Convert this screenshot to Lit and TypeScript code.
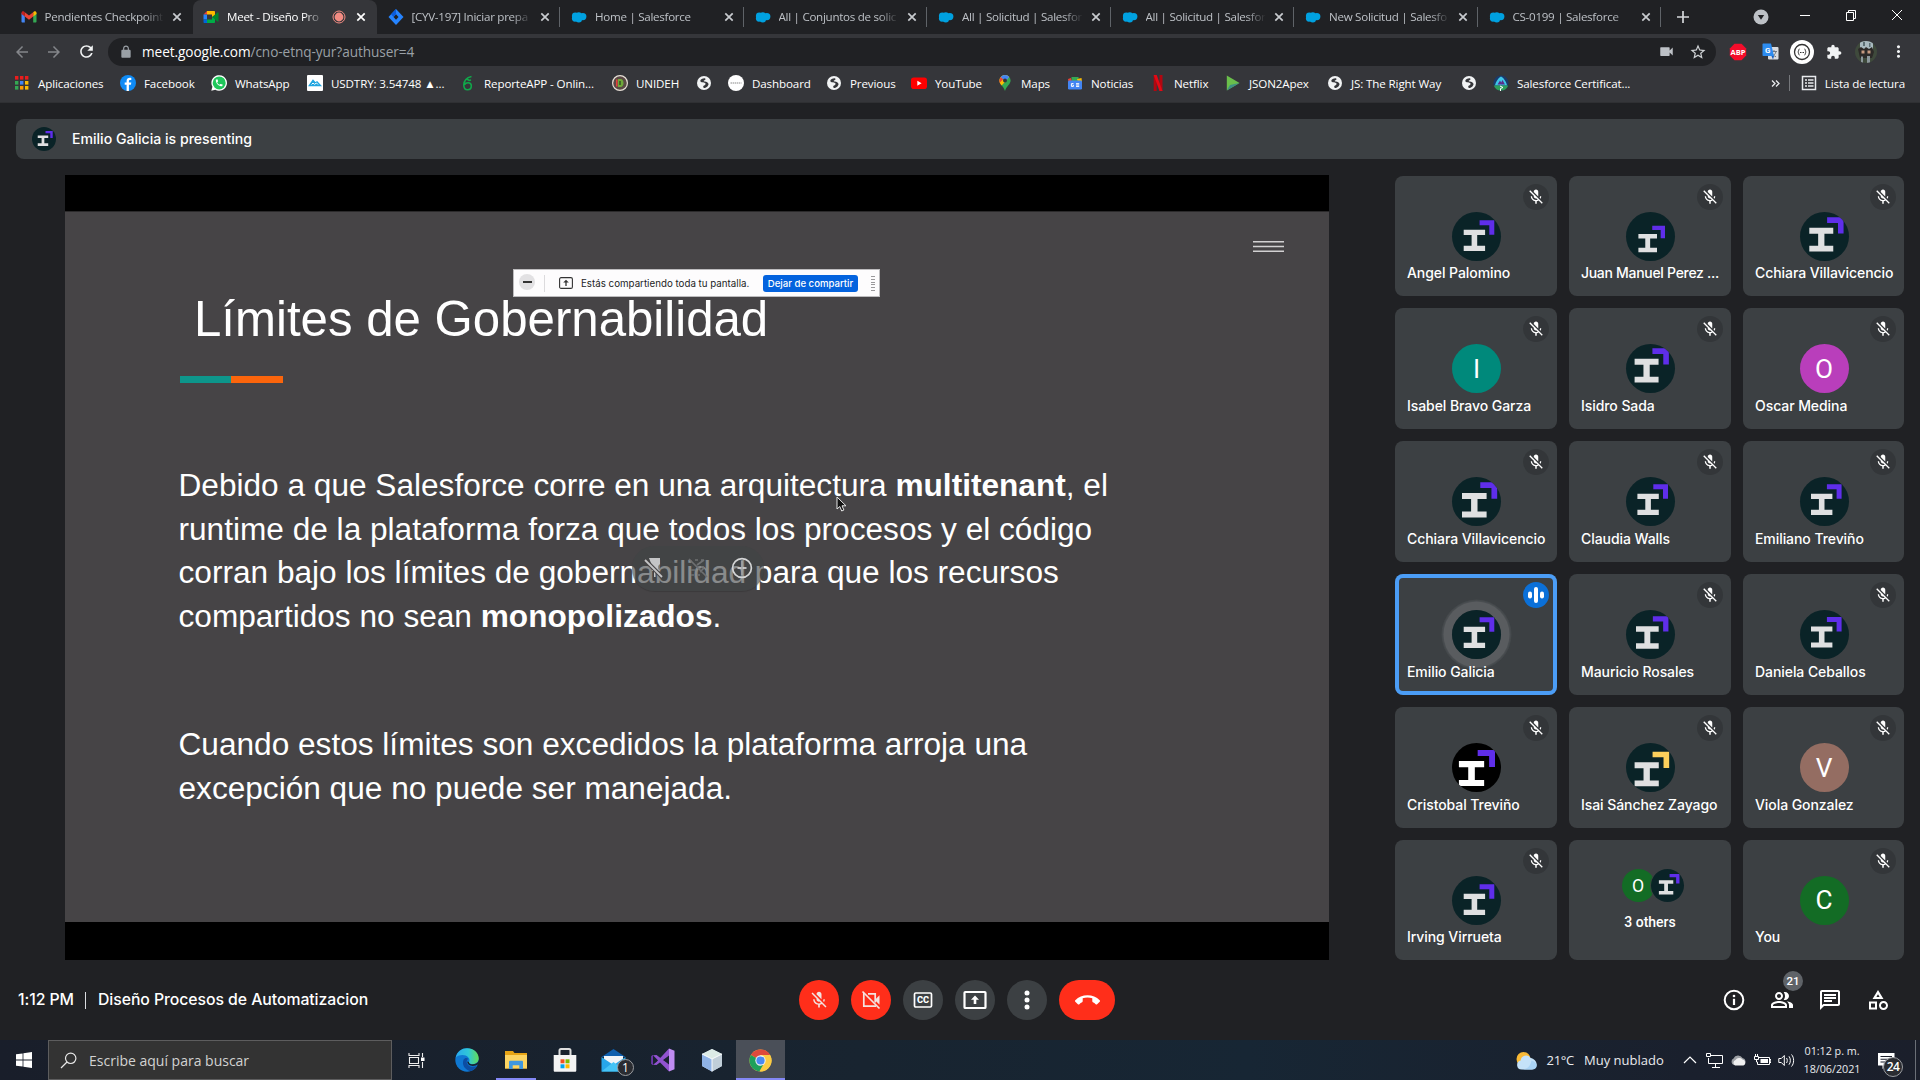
import { LitElement, html, css, svg, nothing, TemplateResult } from "lit";
import { customElement, property } from "lit/decorators.js";
import { classMap } from "lit/directives/class-map.js";

type Art = TemplateResult;

const icon = (size: number, box: string, body: unknown): Art =>
  html`<svg class="ico" width=${size} height=${size} viewBox=${box}>${body}</svg>`;
const m = (size: number, d: string, fill = "#fff"): Art =>
  icon(size, "0 0 24 24", svg`<path d=${d} fill=${fill} />`);

const P = {
  micOff:
    "M19 11h-1.7c0 .74-.16 1.43-.43 2.05l1.23 1.23c.56-.98.9-2.09.9-3.28zm-4.02.17c0-.06.02-.11.02-.17V5c0-1.66-1.34-3-3-3S9 3.34 9 5v.18l5.98 5.99zM4.27 3L3 4.27l6.01 6.01V11c0 1.66 1.33 3 2.99 3 .22 0 .44-.03.65-.08l1.66 1.66c-.71.33-1.5.52-2.31.52-2.76 0-5.3-2.1-5.3-5.1H5c0 3.41 2.72 6.23 6 6.72V21h2v-3.28c.91-.13 1.77-.45 2.54-.9L19.73 21 21 19.73 4.27 3z",
  callEnd:
    "M12 9c-1.6 0-3.15.25-4.6.72v3.1c0 .39-.23.74-.56.9-.98.49-1.87 1.12-2.66 1.85-.18.18-.43.28-.7.28-.28 0-.53-.11-.71-.29L.29 13.08c-.18-.17-.29-.42-.29-.7 0-.28.11-.53.29-.71C3.34 8.78 7.46 7 12 7s8.66 1.78 11.71 4.67c.18.18.29.43.29.71 0 .28-.11.53-.29.71l-2.48 2.48c-.18.18-.43.29-.71.29-.27 0-.52-.11-.7-.28-.79-.74-1.69-1.36-2.67-1.85-.33-.16-.56-.5-.56-.9v-3.1C15.15 9.25 13.6 9 12 9z",
  puzzle:
    "M20.5 11H19V7c0-1.1-.9-2-2-2h-4V3.5C13 2.12 11.88 1 10.5 1S8 2.12 8 3.5V5H4c-1.1 0-1.99.9-1.99 2v3.8H3.5c1.49 0 2.7 1.21 2.7 2.7s-1.21 2.7-2.7 2.7H2V20c0 1.1.9 2 2 2h3.8v-1.5c0-1.49 1.21-2.7 2.7-2.7 1.49 0 2.7 1.21 2.7 2.7V22H17c1.1 0 2-.9 2-2v-4h1.5c1.38 0 2.5-1.12 2.5-2.5S21.88 11 20.5 11z",
  star:
    "M22 9.24l-7.19-.62L12 2 9.19 8.63 2 9.24l5.46 4.73L5.82 21 12 17.27 18.18 21l-1.63-7.03L22 9.24zM12 15.4l-3.76 2.27 1-4.28-3.32-2.88 4.38-.38L12 6.1l1.71 4.04 4.38.38-3.32 2.88 1 4.28L12 15.4z",
  refresh:
    "M17.65 6.35C16.2 4.9 14.21 4 12 4c-4.42 0-7.99 3.58-7.99 8s3.57 8 7.99 8c3.73 0 6.84-2.55 7.73-6h-2.08c-.82 2.33-3.04 4-5.65 4-3.31 0-6-2.69-6-6s2.69-6 6-6c1.66 0 3.14.69 4.22 1.78L13 11h7V4l-2.35 2.35z",
  back: "M20 11H7.83l5.59-5.59L12 4l-8 8 8 8 1.41-1.41L7.83 13H20v-2z",
  forward: "M4 13h12.17l-5.59 5.59L12 20l8-8-8-8-1.41 1.41L16.17 11H4v2z",
  lock: "M18 8h-1V6c0-2.76-2.24-5-5-5S7 3.24 7 6v2H6c-1.1 0-2 .9-2 2v10c0 1.1.9 2 2 2h12c1.1 0 2-.9 2-2V10c0-1.1-.9-2-2-2zM9 8V6c0-1.66 1.34-3 3-3s3 1.34 3 3v2H9z",
  cam: "M17 10.5V6c0-.6-.4-1-1-1H3c-.6 0-1 .4-1 1v12c0 .6.4 1 1 1h13c.6 0 1-.4 1-1v-4.500l5 5V5.500l-5 5z",
  dots: "M12 8c1.100 0 2-.9 2-2s-.9-2-2-2-2 .9-2 2 .9 2 2 2zm0 2c-1.100 0-2 .9-2 2s.9 2 2 2 2-.9 2-2-.9-2-2-2zm0 6c-1.100 0-2 .9-2 2s.9 2 2 2 2-.9 2-2-.9-2-2-2z",
  people:
    "M16.67 13.13C18.04 14.06 19 15.32 19 17v3h4v-3c0-2.18-3.57-3.47-6.33-3.87zM15 12c2.21 0 4-1.790 4-4s-1.790-4-4-4c-.47 0-.91.1-1.330.24C14.500 5.270 15 6.580 15 8s-.5 2.730-1.330 3.760c.42.14.86.24 1.330.24zM9 12c2.210 0 4-1.790 4-4s-1.790-4-4-4-4 1.790-4 4 1.790 4 4 4zm0-6c1.100 0 2 .9 2 2s-.9 2-2 2-2-.9-2-2 .9-2 2-2zM9 13c-2.670 0-8 1.340-8 4v3h16v-3c0-2.660-5.330-4-8-4zm6 5H3v-.99C3.200 16.290 6.300 15 9 15s5.800 1.290 6 2v1z",
  chat: "M4 4h16v12H5.170L4 17.170V4m0-2c-1.100 0-1.990.9-1.990 2L2 22l4-4h14c1.100 0 2-.9 2-2V4c0-1.100-.9-2-2-2H4zm2 10h8v2H6v-2zm0-3h12v2H6V9zm0-3h12v2H6V6z",
  category:
    "M12 2l-5.500 9h11L12 2zm0 4.300L13.600 9h-3.200L12 6.300zM17.500 13c-2.490 0-4.500 2.010-4.500 4.500s2.010 4.500 4.500 4.500 4.500-2.010 4.500-4.500-2.010-4.500-4.500-4.500zm0 7c-1.380 0-2.500-1.120-2.500-2.500s1.120-2.500 2.500-2.500 2.500 1.120 2.500 2.500-1.120 2.500-2.500 2.500zM3 21.500h8v-8H3v8zm2-6h4v4H5v-4z",
  phone:
    "M20 15.500c-1.250 0-2.450-.2-3.570-.57a1.020 1.020 0 0 0-1.020.24l-2.200 2.200a15.050 15.050 0 0 1-6.590-6.590l2.200-2.210a.96.96 0 0 0 .25-1A11.360 11.360 0 0 1 8.500 4c0-.55-.45-1-1-1H4c-.55 0-1 .45-1 1 0 9.390 7.610 17 17 17 .55 0 1-.45 1-1v-3.500c0-.55-.45-1-1-1z",
};

const cloud = icon(16, "0 0 16 16", svg`<g fill="#00a1e0"><circle cx="4.300" cy="7" r="3.400"/><circle cx="4" cy="9.600" r="3.100"/><circle cx="7.800" cy="6.200" r="3"/><circle cx="7.800" cy="10.200" r="3.200"/><circle cx="11.800" cy="7.600" r="3.600"/><rect x="4" y="5" width="8" height="6"/></g>`);
const gmail = icon(16, "0 0 16 16", svg`<path d="M.500 4v8.500c0 .6.400 1 1 1h2.300V6.500z" fill="#4285f4"/><path d="M12.200 6.500v7h2.300c.6 0 1-.4 1-1V4z" fill="#34a853"/><path d="M12.200 3.300v4.300l3.300-2.500V3.800c0-1.300-1.500-2-2.500-1.200z" fill="#fbbc04"/><path d="M3.800 7.600V3.300L8 6.500l4.200-3.200v4.300L8 10.800z" fill="#ea4335"/><path d="M.5 3.800v1.300l3.300 2.500V3.300L3 2.600C2 1.800.5 2.500.5 3.800z" fill="#c5221f"/>`);
const meet = icon(16, "0 0 16 16", svg`<path d="M.5 5.500L4 2v3.500z" fill="#ea4335"/><path d="M.5 5.500H4v5H.5z" fill="#2684fc"/><path d="M.5 10.500H4V14H1.500c-.6 0-1-.4-1-1z" fill="#0066da"/><path d="M4 2h7c.6 0 1 .4 1 1v4l-3 1V5.500H4z" fill="#ffba00"/><path d="M4 10.500h5V8l3 1v4c0 .6-.4 1-1 1H4z" fill="#00ac47"/><path d="M9 8l5.500-4.600c.4-.3 1 0 1 .4v8.400c0 .5-.6.700-1 .4z" fill="#00832d"/>`);
const jira = icon(16, "0 0 16 16", svg`<path d="M8 0l7.500 8L8 16 .5 8z" fill="#2684ff"/><path d="M8 5.300L10.500 8 8 10.700 5.500 8z" fill="#202124"/><path d="M8 0v5.300L5.500 8 3 5.300z" fill="#0a5bdc"/>`);
const globe = icon(16, "0 0 16 16", svg`<circle cx="8" cy="8" r="7" fill="#f1f3f4"/><path d="M8.500 3.200c-2 .2-4 1-4.200 2.600 0 1.800 2.500 1.500 4.200 1.900 1.500.4 1.300 1.600.4 2.200-1 .6-1.800.7-1.700 1.900.1 1 .8 1.400 1.800 1.200 2-.6 3.300-2.300 3.600-4-.6-1.200-1.400-2-2.700-2.300-1.200-.3-2-.1-2.200-.7-.1-.8 1.800-.9 1.800-1.800 0-.500-.3-1-1-1z" fill="#35363a"/>`);

interface TabInfo { art: Art; title: string; active?: boolean; bare?: boolean; }
const TABS: TabInfo[] = [
  { art: gmail, title: "Pendientes Checkpoint", bare: true },
  { art: meet, title: "Meet - Diseño Pro", active: true },
  { art: jira, title: "[CYV-197] Iniciar prepa" },
  { art: cloud, title: "Home | Salesforce" },
  { art: cloud, title: "All | Conjuntos de solic" },
  { art: cloud, title: "All | Solicitud | Salesfor" },
  { art: cloud, title: "All | Solicitud | Salesfor" },
  { art: cloud, title: "New Solicitud | Salesfo" },
  { art: cloud, title: "CS-0199 | Salesforce" },
];

const gridArt = icon(16, "0 0 16 16", svg`${[0, 1, 2].map((r) => [0, 1, 2].map((c) => svg`<rect x=${1 + c * 5} y=${1 + r * 5} width="3.400" height="3.600" fill=${[["#ea1d1d", "#ea1d1d", "#ea1d1d"], ["#34a853", "#4285f4", "#fbbc04"], ["#34a853", "#fb9a04", "#fbbc04"]][r][c]}/>`))}`);
const BOOKMARKS: { art: Art; label?: string; w: number }[] = [
  { art: gridArt, label: "Aplicaciones", w: 106 },
  { art: icon(16, "0 0 16 16", svg`<circle cx="8" cy="8" r="8" fill="#0f8bf5"/><path d="M8.900 16V9.800h2l.4-2.300H8.900V6.200c0-.8.400-1.300 1.300-1.300h1.100V2.900C9 2.400 6.600 2.900 6.600 5.800v1.700H4.700v2.300h1.900V16z" fill="#fff"/>`), label: "Facebook", w: 91 },
  { art: icon(16, "0 0 16 16", svg`<path d="M.3 15.800l1.100-4A7.800 7.800 0 1 1 4.300 14.700z" fill="#fff"/><circle cx="8.200" cy="7.900" r="6.500" fill="#1fc75b"/><g transform="translate(3.700 3.400) scale(.37)"><path d=${P.phone} fill="#fff"/></g>`), label: "WhatsApp", w: 96 },
  { art: icon(16, "0 0 16 16", svg`<rect width="16" height="16" rx="1" fill="#fff"/><path d="M2.500 10.500L6 5.500l2.300 2.600L10 7l3.300 3.500z" fill="#20a5e0" stroke="#20a5e0" stroke-width="1.500"/><path d="M4.500 9.500l1.500-1.500 1.500 1.300 2-1.300 1.500 1.500" fill="none" stroke="#fff"/>`), label: "USDTRY: 3.54748 ▲...", w: 153 },
  { art: icon(16, "0 0 16 16", svg`<path d="M11.500 1.500C7 2.500 4 5.500 3.800 10c0 3 1.400 4.700 3.700 4.700s3.800-1.700 3.800-3.700S10 7.700 8 7.700c-1.600 0-3 .9-3.500 2M7 4l2 1.500 2-.5" fill="none" stroke="#10a84a" stroke-width="1.600"/>`), label: "ReporteAPP - Onlin...", w: 152 },
  { art: icon(16, "0 0 16 16", svg`<circle cx="8" cy="8" r="7.400" fill="#5a4a45" stroke="#e8e0d8" stroke-width="1.200"/><path d="M6 4h2.500c4 0 4 8 0 8H6z" fill="#6fa83a"/><path d="M4.800 4.500v7" stroke="#e2443c" stroke-width="1.600"/><path d="M8 6v4" stroke="#2d4a20" stroke-width="1.400"/>`), label: "UNIDEH", w: 84 },
  { art: globe, w: 32 },
  { art: icon(16, "0 0 16 16", svg`<circle cx="8" cy="8" r="8" fill="#fff"/><path d="M2.500 8h11" stroke="#c4c4c4" stroke-width="2" stroke-dasharray="1.500 .6"/>`), label: "Dashboard", w: 98 },
  { art: globe, label: "Previous", w: 85 },
  { art: icon(16, "0 0 16 16", svg`<rect y="2.500" width="16" height="11.500" rx="2.800" fill="#f00"/><path d="M6.300 5.800v5l4.300-2.500z" fill="#fff"/>`), label: "YouTube", w: 86 },
  { art: icon(16, "0 0 16 16", svg`<path d="M8 0a5.600 5.600 0 0 1 5.600 5.600C13.600 9.500 9.500 11 8 16 6.500 11 2.400 9.500 2.400 5.600A5.600 5.600 0 0 1 8 0z" fill="#34a853"/><path d="M2.400 5.600C2.400 2.500 5 0 8 0c1.700 0 3.300.8 4.300 2L4.700 10.500C3.400 9.300 2.400 7.900 2.400 5.600z" fill="#fbbc04"/><path d="M8 0c1.700 0 3.300.8 4.300 2L8.500 6.500 3.700 2.200C4.700.9 6.200 0 8 0z" fill="#4285f4"/><path d="M3.700 2.200L6.200 4.300 2.700 7.700C2.100 5.500 2.500 3.700 3.700 2.200z" fill="#ea4335"/><circle cx="8" cy="5.600" r="2" fill="#35363a"/>`), label: "Maps", w: 70 },
  { art: icon(16, "0 0 16 16", svg`<path d="M4.500 2h7v4h-7z" fill="#34a853"/><path d="M1 4l3-1 1 4H1.500z" fill="#ea4335"/><path d="M10 4l4.500-1 .5 4h-4z" fill="#fbbc04"/><rect x="1" y="5.500" width="14" height="9" rx="1.200" fill="#4285f4"/><path d="M6.500 8.600H4.400v2.800h2v-1.300h-.8M9 8.700h3.200M9 10h3.200M9 11.400h3.200" stroke="#fff" fill="none"/>`), label: "Noticias", w: 83 },
  { art: icon(16, "0 0 16 16", svg`<path d="M3.700 0h3v16h-3zM9.500 0h3v16h-3z" fill="#b20710"/><path d="M3.700 0h3l5.800 16h-3z" fill="#e50914"/>`), label: "Netflix", w: 75 },
  { art: icon(16, "0 0 16 16", svg`<path d="M1.800.5L14.500 8 1.800 15.500z" fill="#6abf4b"/><path d="M1.800 15.500L14.500 8 5 10z" fill="#3d8f83"/>`), label: "JSON2Apex", w: 102 },
  { art: globe, label: "JS: The Right Way", w: 134 },
  { art: globe, w: 32 },
  { art: icon(16, "0 0 16 16", svg`<circle cx="8" cy="8" r="7.600" fill="#1a3a6b"/><path d="M8 1.500c3 1.500 5.500 6 6 9H2c.5-3 3-7.500 6-9z" fill="#3ec5e8"/><path d="M4.500 9.500L7 5.500 8.200 7.500 9.500 5l2.500 4.500z" fill="#5a2d8c"/><path d="M.8 10.500h14.400c-1 3-3.500 5-7.200 5s-6.200-2-7.200-5z" fill="#2e9e5b"/><path d="M7 11l3 1.500-2.500 1V16" stroke="#fff" fill="none"/>`), label: "Salesforce Certificat...", w: 240 },
];

/* Beam logo: x/y of its bounding box in a 49-unit avatar, and its scale. */
interface Logo { x: number; y: number; k: number; bg?: string; beam?: string; hook?: string; }
interface Person { name: string; logo?: Logo; letter?: string; color?: string; speaking?: boolean; others?: boolean; }
const PEOPLE: Person[] = [
  { name: "Angel Palomino", logo: { x: 11.700, y: 8.300, k: 1 } },
  { name: "Juan Manuel Perez ...", logo: { x: 12.400, y: 13.700, k: 0.870 } },
  { name: "Cchiara Villavicencio", logo: { x: 9.300, y: 5.300, k: 1.120 } },
  { name: "Isabel Bravo Garza", letter: "I", color: "#00897b" },
  { name: "Isidro Sada", logo: { x: 8.600, y: 4.300, k: 1.120 } },
  { name: "Oscar Medina", letter: "O", color: "#b93ebb" },
  { name: "Cchiara Villavicencio", logo: { x: 10, y: 5.300, k: 1.150 } },
  { name: "Claudia Walls", logo: { x: 11.400, y: 7.300, k: 1 } },
  { name: "Emiliano Treviño", logo: { x: 11, y: 7.300, k: 1 } },
  { name: "Emilio Galicia", logo: { x: 11.700, y: 7.300, k: 1 }, speaking: true },
  { name: "Mauricio Rosales", logo: { x: 10, y: 6.300, k: 1.060 } },
  { name: "Daniela Ceballos", logo: { x: 11, y: 7, k: 1 } },
  { name: "Cristobal Treviño", logo: { x: 6.900, y: 7, k: 1.180, bg: "#000", beam: "#fff" } },
  { name: "Isai Sánchez Zayago", logo: { x: 8.600, y: 8.700, k: 1.130, hook: "#fdd05b" } },
  { name: "Viola Gonzalez", letter: "V", color: "#946d62" },
  { name: "Irving Virrueta", logo: { x: 11.700, y: 8.300, k: 1 } },
  { name: "3 others", others: true },
  { name: "You", letter: "C", color: "#136c25" },
];

const base = css`
  :host { display: block; box-sizing: border-box; }
  *, *::before, *::after { box-sizing: border-box; }
  .ico { display: block; flex: none; }
`;

@customElement("meet-avatar")
class MeetAvatar extends LitElement {
  static styles = [base, css`
    .disc { border-radius: 50%; overflow: hidden; display: flex; align-items: center; justify-content: center; color: #fff; font-family: Roboto, sans-serif; font-weight: 400; letter-spacing: 0; }
  `];
  @property({ attribute: false }) logo?: Logo;
  @property() letter = "";
  @property() color = "#0a2327";
  @property({ type: Number }) size = 49;
  render() {
    const l = this.logo;
    return html`<div class="disc" style="width:${this.size}px;height:${this.size}px;background:${l?.bg ?? this.color};font-size:${this.size * 0.535}px">
      ${l ? html`<svg class="ico" width=${this.size} height=${this.size} viewBox="0 0 49 49"><g transform="translate(${l.x} ${l.y}) scale(${l.k})">
          <path d="M0 9.400h21.400v5.200h-7.900v10.800h7.900v5.200H0v-5.200h7.900V14.600H0z" fill=${l.beam ?? "#dfe0e1"}/>
          <path d="M15.900 0h14.700v14.400h-5V5H15.900z" fill=${l.hook ?? "#5f2eea"}/></g></svg>` : this.letter}
    </div>`;
  }
}

@customElement("browser-chrome")
class BrowserChrome extends LitElement {
  static styles = [base, css`
    :host { font: 11.6px "Open Sans", sans-serif; letter-spacing: -0.12px; color: #fff; }
    .strip { height: 34px; background: #202124; display: flex; padding-left: 9.500px; }
    .tab { width: 183.500px; height: 34px; padding: 0 11px 0 11px; display: flex; align-items: center; gap: 8px; color: #bdc1c6; letter-spacing: -0.28px; }
    .tab.sep { padding-right: 9px; }
    .tab.on { background: #35363a; border-radius: 8px 8px 0 0; color: #fff; padding-left: 10px; padding-right: 11px; }
    .tab.sep { border-right: 1px solid transparent; background: linear-gradient(#5f6368, #5f6368) right 7px / 1px 20px no-repeat; background-origin: border-box; }
    .name { flex: 1; min-width: 0; overflow: hidden; white-space: nowrap; line-height: 20px; -webkit-mask-image: linear-gradient(90deg, #000 calc(100% - 20px), transparent); }
    .plus { margin: 0 0 0 15px; align-self: center; }
    .win { margin-left: auto; display: flex; align-items: center; height: 34px; padding-right: 17px; }
    .win .drop { margin-right: 30px; }
    .win .a { margin: -5px 34px 0 0; }
    .win .b { margin-top: -5px; }
    .bar { height: 35px; background: #35363a; display: flex; align-items: center; }
    .nav { width: 108px; display: flex; gap: 14px; padding-left: 13px; align-items: center; }
    .url { width: 1608px; height: 28px; margin-top: 1px; border-radius: 14px; background: #202124; display: flex; align-items: center; padding: 0 9px 1px 11px; font-size: 13.650px; letter-spacing: -0.08px; color: #9aa0a6; }
    .url .t { margin-left: 9px; white-space: nowrap; }
    .url b { font-weight: 400; color: #fff; }
    .url .r { margin-left: auto; display: flex; gap: 15px; align-items: center; }
    .ext { display: flex; flex: 1; align-items: center; padding: 0 10px; justify-content: space-between; }
    .cell { width: 24px; display: flex; justify-content: center; }
    .marks { height: 34px; background: #35363a; border-bottom: 1px solid #2f3033; display: flex; padding: 0 15px 5px 14px; align-items: center; }
    .mark { display: flex; gap: 8px; align-items: center; white-space: nowrap; flex: none; }
    .tail { margin-left: auto; display: flex; align-items: center; white-space: nowrap; }
    .tail .line { width: 1px; height: 16px; background: #75777b; margin: 0 11px 0 9px; }
    .tail .rl { margin-left: 8px; }
    svg text { letter-spacing: 0; }
  `];
  render() {
    const x = (c: string) => icon(10, "0 0 10 10", svg`<path d="M1.300 1.300l7.400 7.400M8.700 1.300L1.300 8.700" stroke=${c} stroke-width="1.700"/>`);
    return html`
      <div class="strip">
        ${TABS.map((t) => html`<div class=${classMap({ tab: true, on: !!t.active, sep: !t.active && !t.bare })}>
          ${t.art}<div class="name">${t.title}</div>
          ${t.active ? icon(16, "0 0 16 16", svg`<circle cx="7" cy="8" r="4.400" fill="#f28b82"/><circle cx="7" cy="8" r="6" fill="none" stroke="#f28b82"/>`) : nothing}
          ${x(t.active ? "#fff" : "#c8cbcf")}</div>`)}
        <div class="plus">${icon(14, "0 0 14 14", svg`<path d="M7 1v12M1 7h12" stroke="#d5d7da" stroke-width="1.700"/>`)}</div>
        <div class="win">
          <div class="drop">${icon(16, "0 0 16 16", svg`<circle cx="8" cy="8" r="7.500" fill="#bdc1c6"/><path d="M4.800 6h6.400L8 10.700z" fill="#202124"/>`)}</div>
          <div class="a">${icon(12, "0 0 12 12", svg`<path d="M1 6.500h10" stroke="#fff"/>`)}</div>
          <div class="a">${icon(12, "0 0 12 12", svg`<path d="M1.500 3.500h7v8h-7zM3.500 3.500v-2h7v8h-2" fill="none" stroke="#fff"/>`)}</div>
          <div class="b">${icon(12, "0 0 12 12", svg`<path d="M1 1l10 10M11 1L1 11" stroke="#fff"/>`)}</div>
        </div>
      </div>
      <div class="bar">
        <div class="nav">${m(18, P.back, "#84868a")}${m(18, P.forward, "#84868a")}${m(19, P.refresh, "#f1f3f4")}</div>
        <div class="url">${m(14, P.lock, "#9aa0a6")}
          <div class="t"><b>meet.google.com</b>/cno-etnq-yur?authuser=4</div>
          <div class="r">${m(15, P.cam, "#bdc1c6")}${m(18, P.star, "#d0d3d6")}</div></div>
        <div class="ext">
          <div class="cell">${icon(18, "0 0 18 18", svg`<path d="M5.500.8h7l4.700 4.700v7l-4.700 4.700h-7L.8 12.500v-7z" fill="#f40d2b"/><text x="9" y="12" text-anchor="middle" font-family="Open Sans" font-weight="700" font-size="7.500" fill="#fff">ABP</text>`)}</div>
          <div class="cell">${icon(17, "0 0 17 17", svg`<rect x="6" y="4" width="10.500" height="12.500" rx="1" fill="#dadce0"/><path d="M9 8.500h6M12 7v1.500M14 8.500c-.6 2.500-2 4-4 5M10 10c.8 1.700 2 2.900 4 3.800" fill="none" stroke="#6f7883"/><path d="M1.500.5H9L12 13H1.500c-.6 0-1-.4-1-1V1.500c0-.6.4-1 1-1z" fill="#2d8cf0"/><path d="M9.500 13H12l-1 3.500z" fill="#1a5bb8"/><text x="5.700" y="9.600" text-anchor="middle" font-family="Roboto" font-weight="700" font-size="8" fill="#fff">G</text>`)}</div>
          <div class="cell">${icon(24, "0 0 24 24", svg`<circle cx="12" cy="12" r="12" fill="#fff"/><circle cx="12" cy="12" r="7.500" fill="none" stroke="#333" stroke-width="1.300"/><path d="M9.500 9c-1.300 0-.3 2.300-1.700 3 1.400.7.4 3 1.700 3M14.500 9c1.300 0 .3 2.300 1.700 3-1.400.7-.4 3-1.700 3" fill="none" stroke="#333"/><path d="M10 12.500h4" stroke="#333" stroke-dasharray="1 .5"/>`)}</div>
          <div class="cell">${m(16, P.puzzle, "#f1f3f4")}</div>
          <div class="cell">${icon(22, "0 0 22 22", svg`<clipPath id="c"><circle cx="11" cy="11" r="11"/></clipPath><g clip-path="url(#c)"><path d="M0 0h22v22H0z" fill="#3f4a3c"/><path d="M5 0h13v9H5z" fill="#a9bac0"/><path d="M8 1h2v4H8zM14 2h1.500v4H14z" fill="#5d6f74"/><path d="M3 8l3-2 3 2 2-2 3 2 3-2 2 5-2 6H5z" fill="#2c2a28"/><path d="M6.500 9.500h3v3h-3zM12.500 9.500h3v3h-3z" fill="#c79a80"/><path d="M6 15.500h2V22H6zM12 15h3v7h-3z" fill="#8c979b"/></g>`)}</div>
          <div class="cell">${m(19, P.dots, "#f1f3f4")}</div>
        </div>
      </div>
      <div class="marks">
        ${BOOKMARKS.map((b) => html`<div class="mark" style="width:${b.w}px">${b.art}${b.label ? html`<span>${b.label}</span>` : nothing}</div>`)}
        <div class="tail">
          ${icon(9, "0 0 9 9", svg`<path d="M1 1.500l3 3-3 3M5 1.500l3 3-3 3" fill="none" stroke="#e8eaed" stroke-width="1.300"/>`)}
          <div class="line"></div>
          ${icon(16, "0 0 16 16", svg`<rect x="1.500" y="1.500" width="13" height="13" fill="none" stroke="#e8eaed" stroke-width="1.500"/><path d="M4 5h2M7 5h5.500M4 8h2M7 8h5.500M4 11h2M7 11h5.500" stroke="#e8eaed" stroke-width="1.500"/>`)}
          <span class="rl">Lista de lectura</span>
        </div>
      </div>`;
  }
}

@customElement("shared-slide")
class SharedSlide extends LitElement {
  static styles = [base, css`
    :host { background: #000; padding: 36px 0 38px; position: relative; width: 1264px; height: 785px; }
    .slide { height: 711px; background: #464446; border-top: 1px solid #2b2a2b; padding: 79px 0 0 113.500px; color: #fff; font: 31.610px/43.400px "Liberation Sans", Arial, sans-serif; }
    h1 { font-weight: 400; font-size: 49.200px; line-height: 56px; margin: 0 0 0 15.500px; }
    .rule { display: flex; width: 103px; height: 7px; margin: 29px 0 81.300px 1.500px; background: linear-gradient(90deg, #0d968b 50%, #fb650c 50%); }
    p { margin: 0 0 85.500px; white-space: nowrap; }
    .menu { position: absolute; left: 1188px; top: 65px; }
    .share { position: absolute; left: 448px; top: 94px; width: 367px; height: 28px; background: #fdfcfd; border: 1px solid #bdbcbe; display: flex; align-items: center; font: 9.750px Inter, sans-serif; color: #1c1c1e; white-space: nowrap; }
    .min { width: 16px; height: 16px; border-radius: 50%; background: #e2e1e3; margin: -2px 0 0 5px; display: flex; align-items: center; justify-content: center; }
    .min::after { content: ""; width: 9px; height: 1.500px; background: #333; }
    .v { width: 1px; height: 17px; background: #dcdbdd; margin: 0 14px 0 9px; }
    .msg { margin: 0 13px 0 8px; width: 169px; }
    .stop { width: 95px; height: 17px; border-radius: 3px; background: #0463de; color: #fff; display: flex; align-items: center; justify-content: center; font-weight: 500; font-size: 9.600px; }
    .grip { margin-left: 13px; width: 4px; height: 15px; background: repeating-linear-gradient(#9a999b 0 1px, transparent 1px 2.800px); }
    .pill { position: absolute; left: 567px; top: 371px; width: 132px; height: 45px; border-radius: 22px; background: rgba(64, 67, 70, 0.62); display: flex; align-items: center; justify-content: space-between; padding: 0 11px 2px 12px; box-shadow: 0 1px 1px rgba(0, 0, 0, 0.15); }
    .cur { position: absolute; left: 771px; top: 321px; }
  `];
  render() {
    return html`
      <div class="slide">
        <h1>Límites de Gobernabilidad</h1>
        <div class="rule"></div>
        <p>Debido a que Salesforce corre en una arquitectura <b>multitenant</b>, el<br>runtime de la plataforma forza que todos los procesos y el código<br>corran bajo los límites de gobernabilidad para que los recursos<br>compartidos no sean <b>monopolizados</b>.</p>
        <p>Cuando estos límites son excedidos la plataforma arroja una<br>excepción que no puede ser manejada.</p>
      </div>
      <div class="menu"><svg class="ico" width="31" height="13"><path d="M0 1.700h31M0 6.500h31M0 11.200h31" stroke="#d2d1d2" stroke-width="1.600"/></svg></div>
      <div class="share">
        <div class="min"></div><div class="v"></div>
        <svg class="ico" width="14" height="12"><rect x=".6" y=".6" width="12.800" height="10.800" rx="1.500" fill="none" stroke="#333" stroke-width="1.100"/><path d="M7 9V4" stroke="#333" stroke-width="1.300"/><path d="M4.200 5.500L7 2.700l2.800 2.800z" fill="#333"/></svg>
        <div class="msg">Estás compartiendo toda tu pantalla.</div>
        <div class="stop">Dejar de compartir</div><div class="grip"></div>
      </div>
      <div class="pill">
        <svg class="ico" width="20" height="22" viewBox="0 0 20 22"><path d="M5 1h11v6l-2 2v3l2 2h-4.500v6h-1.500v-6H8V9z" fill="#c4c5c6"/><path d="M1 3l17 17" stroke="#464446" stroke-width="4"/><path d="M1 3l17 17" stroke="#c4c5c6" stroke-width="1.800"/></svg>
        <svg class="ico" width="20" height="20" viewBox="0 0 20 20"><path d="M1 1l18 18M7 2h3M13 2h3M9 7l7-5M13 9h3M3 12h4M12 14l4-4M3 17h3M9 17h3" stroke="#6f7072" stroke-width="1.700"/></svg>
        <svg class="ico" width="22" height="22" viewBox="0 0 22 22"><circle cx="11" cy="11" r="9.400" fill="none" stroke="#d4d5d6" stroke-width="1.700"/><path d="M6.500 11h9" stroke="#d4d5d6" stroke-width="1.700"/><path d="M11 4v14" stroke="#a4a5a7" stroke-width="1.500"/></svg>
      </div>
      <svg class="ico cur" width="12" height="17" viewBox="0 0 12 17"><path d="M1 1v12l2.800-2.500 1.900 4.500 2.200-1L6 9.800h4z" fill="#111" stroke="#e8e8e8"/></svg>`;
  }
}

@customElement("meet-tile")
class MeetTile extends LitElement {
  static styles = [base, css`
    .tile { height: 100%; border-radius: 8px; background: #3c4043; position: relative; display: flex; align-items: center; justify-content: center; font: 500 14px/20px Inter, sans-serif; letter-spacing: -0.07px; color: #fff; }
    .talk { box-shadow: inset 0 0 0 4px #4b9df6; }
    .name { position: absolute; left: 12px; bottom: 13px; white-space: nowrap; }
    .tight { letter-spacing: -0.3px; }
    .mic { position: absolute; right: 8px; top: 8px; width: 26px; height: 26px; border-radius: 50%; background: #333639; display: flex; align-items: center; justify-content: center; }
    .talk .mic { background: #0b70d8; }
    .halo { border-radius: 50%; margin-left: 1px; }
    .talk .halo { box-shadow: 0 0 0 8.500px #595c5f, 0 0 0 9.500px #4a4e51, 0 0 0 10.500px #45494c; }
    .group { flex-direction: column; font-family: Roboto, sans-serif; letter-spacing: 0; }
    .pair { display: flex; align-items: center; margin: 8px 0 0 6px; }
    .pair .second { margin-left: -5px; border: 1px solid #3c4043; border-radius: 50%; }
    .cap { margin: 9px 0 8px; }
  `];
  @property({ attribute: false }) who!: Person;
  render() {
    const p = this.who;
    if (p.others) {
      return html`<div class="tile group"><div class="pair">
        <meet-avatar .size=${33} .letter=${"O"} .color=${"#136c25"}></meet-avatar>
        <div class="second"><meet-avatar .size=${33} .logo=${{ x: 11.700, y: 7.300, k: 1 }}></meet-avatar></div>
      </div><div class="cap">${p.name}</div></div>`;
    }
    return html`<div class=${classMap({ tile: true, talk: !!p.speaking })}>
      <div class="halo"><meet-avatar .logo=${p.logo} .letter=${p.letter ?? ""} .color=${p.color ?? "#0a2327"}></meet-avatar></div>
      <div class="mic">${p.speaking
        ? icon(18, "0 0 18 18", svg`<g fill="#fff"><rect x="1" y="5.500" width="4" height="7" rx="2"/><rect x="7" y="1" width="4" height="16" rx="2"/><rect x="13" y="5.500" width="4" height="7" rx="2"/></g>`)
        : m(18, P.micOff)}</div>
      <div class=${classMap({ name: true, tight: p.name.endsWith("...") })}>${p.name}</div>
    </div>`;
  }
}

@customElement("meet-controls")
class MeetControls extends LitElement {
  static styles = [base, css`
    :host { height: 80px; display: grid; grid-template-columns: 799px 316px 1fr; align-items: center; color: #fff; font: 500 15.800px/20px Inter, sans-serif; }
    .info { display: flex; align-items: center; padding-left: 18px; letter-spacing: -0.06px; white-space: nowrap; }
    .time { width: 67px; }
    .line { width: 1px; height: 17px; background: #dadce0; margin-right: 12px; }
    .mid { display: flex; gap: 12px; }
    .btn { width: 40px; height: 40px; border-radius: 20px; background: #3c4043; display: flex; align-items: center; justify-content: center; }
    .red { background: #ff2e1a; }
    .wide { width: 56px; }
    .right { display: flex; justify-content: flex-end; gap: 24px; padding-right: 30px; }
    .rel { position: relative; }
    .badge { position: absolute; left: 13px; top: -17px; width: 20px; height: 20px; border-radius: 50%; background: #5f6368; font: 500 11.500px/20px Roboto, sans-serif; text-align: center; }
  `];
  render() {
    return html`
      <div class="info"><div class="time">1:12 PM</div><div class="line"></div><div>Diseño Procesos de Automatizacion</div></div>
      <div class="mid">
        <div class="btn red">${m(20, P.micOff, "#f3e3e1")}</div>
        <div class="btn red">${icon(20, "0 0 20 20", svg`<path d="M3 3.800h-.2v12.400H15M7 3.800h7.200v8.800" fill="none" stroke="#f3e3e1" stroke-width="1.700"/><path d="M14.500 9.200l4-4v9.600l-4-4z" fill="#f3e3e1"/><path d="M1.500 1.500l17 17" stroke="#f3e3e1" stroke-width="1.700"/>`)}</div>
        <div class="btn">${icon(20, "0 0 20 20", svg`<rect x="1.500" y="3" width="17" height="14" rx="1.200" fill="none" stroke="#fff" stroke-width="1.700"/><text x="10" y="13.300" text-anchor="middle" font-family="Roboto" font-weight="900" font-size="9.300" fill="#fff">CC</text>`)}</div>
        <div class="btn">${icon(24, "0 0 24 24", svg`<rect x="1.500" y="4" width="21" height="16" rx=".8" fill="none" stroke="#fff" stroke-width="2.200"/><path d="M12 7.500l4 4.200h-2.700V16h-2.600v-4.300H8z" fill="#fff"/>`)}</div>
        <div class="btn">${icon(24, "0 0 24 24", svg`<g fill="#fff"><circle cx="12" cy="5" r="2.500"/><circle cx="12" cy="12" r="2.500"/><circle cx="12" cy="19" r="2.500"/></g>`)}</div>
        <div class="btn red wide">${m(25, P.callEnd)}</div>
      </div>
      <div class="right">
        ${icon(24, "0 0 24 24", svg`<circle cx="12" cy="12" r="9.300" fill="none" stroke="#fff" stroke-width="2"/><path d="M12 10.800v6.200" stroke="#fff" stroke-width="2.200"/><circle cx="12" cy="8" r="1.300" fill="#fff"/>`)}
        <div class="rel">${m(24, P.people)}<div class="badge">21</div></div>
        ${m(24, P.chat)}${m(24, P.category)}
      </div>`;
  }
}

@customElement("task-bar")
class TaskBar extends LitElement {
  static styles = [base, css`
    :host { height: 40px; display: flex; align-items: stretch; background: linear-gradient(90deg, #191e2a 0, #182430 45%, #172634 65%, #1a202d 88%, #1b1f2b 100%); color: #e9ebee; font: 13px "Open Sans", sans-serif; white-space: nowrap; }
    .slot { width: 49px; display: flex; align-items: center; justify-content: center; position: relative; flex: none; }
    .start { width: 48px; }
    .view { width: 50px; padding-right: 2px; }
    .search { width: 344px; border: 1px solid #5d5d5e; background: #333; display: flex; align-items: center; gap: 12px; padding-left: 11px; font-size: 14px; color: #d2d2d2; }
    .open::after { content: ""; position: absolute; left: 5px; right: 4px; bottom: 0; height: 2px; background: #8488f5; }
    .front { background: #4a4f58; }
    .front::after { left: 0; right: 0; }
    .num { position: absolute; border-radius: 50%; border: 1px solid #9a9ca0; background: #2a2c31; color: #fff; font: 500 12px/15px "Open Sans", sans-serif; text-align: center; width: 17px; height: 17px; left: 28px; top: 19px; }
    .tray { margin-left: auto; display: flex; align-items: center; }
    .deg { margin: 0 10px 0 10px; letter-spacing: -0.3px; }
    .tray .muy { width: 94px; }
    .i { width: 24px; display: flex; justify-content: center; }
    .clock { width: 68px; text-align: center; font-size: 10.800px; line-height: 17.500px; letter-spacing: -0.05px; padding-bottom: 1px; }
    .note { width: 49px; height: 40px; position: relative; display: flex; align-items: center; padding-left: 12px; }
    .note .num { width: 20px; height: 20px; left: 17px; top: 17px; font: 600 12px/18px "Open Sans", sans-serif; letter-spacing: -0.5px; }
    .edge { width: 1px; height: 40px; background: #6b6f77; margin-right: 4px; }
  `];
  render() {
    return html`
      <div class="slot start">${icon(16, "0 0 16 16", svg`<path d="M0 2.300L6.600 1.400v6.100H0zM7.400 1.300L16 0v7.500H7.400zM0 8.400h6.600v6.200L0 13.700zM7.400 8.400H16V16l-8.600-1.200z" fill="#fff"/>`)}</div>
      <div class="search">${icon(17, "0 0 17 17", svg`<circle cx="10.700" cy="6.300" r="5.200" fill="none" stroke="#e8e8e8" stroke-width="1.200"/><path d="M7 10L1 16" stroke="#e8e8e8" stroke-width="1.200"/>`)}<span>Escribe aquí para buscar</span></div>
      <div class="slot view">${icon(17, "0 0 17 17", svg`<path d="M1 1v2.500h10V1M1 16v-2.500h10V16M1.500 5.500h9v6h-9zM14.500 1v4M14.500 10v6" fill="none" stroke="#eee" stroke-width="1.100"/><rect x="13" y="5.500" width="3.500" height="3.500" fill="#fff"/>`)}</div>
      <div class="slot">${icon(24, "0 0 24 24", svg`<defs><linearGradient id="e1" x1="0" x2="1"><stop offset="0" stop-color="#29a8ee"/><stop offset=".55" stop-color="#2fc8d8"/><stop offset="1" stop-color="#63dc55"/></linearGradient></defs><circle cx="12" cy="12" r="11.700" fill="#0f78d2"/><path d="M.8 9.500C2 3.700 6.500.3 12 .3c7 0 11.700 4.700 11.700 10 0 3.500-2.800 5.900-6 5.900-2.600 0-4.200-1-3.700-2.200.9-1.300.6-3.300-.7-4.600C10.700 6.500 4.800 6 .8 9.500z" fill="url(#e1)"/><path d="M8.600 11.500c-2 5.500 1 9.700 6.300 11.700 3.300-.9 6-2.900 7.500-5.500-3.500 2-9.400 1.500-10.600-3-.3-1.700.4-3 1.400-3.900-1.500-1.500-3.600-1-4.600.7z" fill="#0c4ea3"/><path d="M12.300 13.500c0 2.800 2.700 4.600 5.600 4.400 2.300-.2 4-.9 4.900-1.500l.7.6c1-2 .5-4 .5-5-1 3-3.600 4.200-6.200 4.200-2.600 0-4.200-1-3.700-2.200z" fill="#182330"/>`)}</div>
      <div class="slot open">${icon(24, "0 0 24 24", svg`<path d="M1 3h8l1.500 2H23v15.500H1z" fill="#e7a415"/><path d="M1 7h22v13.500H1z" fill="#fcd462"/><path d="M5 21v-7c0-.8.5-1.300 1.300-1.300h11.400c.8 0 1.300.5 1.300 1.300v7h-3.700v-3.700H8.700V21z" fill="#3f97df"/>`)}</div>
      <div class="slot">${icon(24, "0 0 24 24", svg`<path d="M6.500 7V2.500c0-1 .6-1.500 1.500-1.500h8c.9 0 1.500.5 1.500 1.500V7" fill="none" stroke="#ddd" stroke-width="2"/><path d="M.7 7h22.600v15.500c0 .8-.5 1.300-1.300 1.300H2c-.8 0-1.300-.5-1.300-1.300z" fill="#f4f4f4"/><path d="M7.500 11.300h4v4h-4z" fill="#f25022"/><path d="M12.500 11.300h4v4h-4z" fill="#7fba00"/><path d="M7.500 16.300h4v4h-4z" fill="#00a4ef"/><path d="M12.500 16.300h4v4h-4z" fill="#ffb900"/>`)}</div>
      <div class="slot">${icon(25, "0 0 25 25", svg`<path d="M.5 9L12.500 1l12 8z" fill="#0f5fae"/><path d="M3 8h19v9H3z" fill="#f1f4f7"/><path d="M.5 9l12 8 12-8v14.500H.5z" fill="#27a6ea"/><path d="M.5 23.500L12.500 14l12 9.500z" fill="#45c3f5"/>`)}<div class="num">1</div></div>
      <div class="slot">${icon(24, "0 0 24 24", svg`<path d="M18 .5l5.500 2.300v18.400L18 23.500z" fill="#c08cf2"/><path d="M18 .5L5.500 14 2 16.700l-1.500-.8V8L2 7.200 18 23.500v-7L5.500 7 2 7.200v9.500L5.500 17 18 7.500z" fill="#9152d0"/><path d="M.5 8L2 7.200v9.500L.5 16z" fill="#6b33ab"/>`)}</div>
      <div class="slot">${icon(24, "0 0 24 24", svg`<path d="M12 1l10 5v12l-10 5.500L2 18V6z" fill="#cfdcec"/><path d="M12 1l10 5-10 5L2 6z" fill="#dcebe6"/><path d="M2 6l10 5v12.500L2 18z" fill="#8fb3e6"/><path d="M12 11l10-5v12l-10 5.500z" fill="#c0ced8"/><path d="M12 11v12.500M2 6l10 5 10-5" stroke="#fff" fill="none" stroke-width=".9"/>`)}</div>
      <div class="slot open front">${icon(23, "0 0 24 24", svg`<circle cx="12" cy="12" r="11.500" fill="#fccc44"/><path d="M12 12L2 6.200A11.500 11.500 0 0 1 22 6.300H12z" fill="#df4a3c"/><path d="M2 6.200L12 12l2.500 5-3.700 6.400A11.500 11.500 0 0 1 2 6.200z" fill="#1ea05b"/><path d="M22 6.300H12L17 15l-5.500 8.500A11.500 11.500 0 0 0 22 6.300z" fill="#fccc44"/><circle cx="12" cy="12" r="5.400" fill="#f4f4f4"/><circle cx="12" cy="12" r="4.300" fill="#4a8af4"/>`)}</div>
      <div class="tray">
        ${icon(21, "0 0 21 21", svg`<circle cx="7.500" cy="9" r="7" fill="#f9b934"/><path d="M5.500 19.500a4.500 4.500 0 0 1-.8-8.900 5.300 5.300 0 0 1 9.700-2.800c3.600 1 6.300 3.600 6.300 6.800 0 3-2 4.900-4.700 4.900z" fill="#c5e2f8"/><path d="M5.500 19.500c5 0 9-3 10-9 3 1 5.200 2.500 5.200 4.900 0 2.500-2 4.100-4.700 4.100z" fill="#a9d3f5"/>`)}
        <span class="deg">21°C</span><span class="muy">Muy nublado</span>
        <div class="i">${icon(14, "0 0 14 14", svg`<path d="M1 10l6-6 6 6" fill="none" stroke="#fff" stroke-width="1.200"/>`)}</div>
        <div class="i">${icon(17, "0 0 17 17", svg`<path d="M5 3.500h11.500v8H2.500V6M9.500 11.500v3.500M6 15.500h8" fill="none" stroke="#fff"/><path d="M.5 1.500h4v3h-4z" fill="none" stroke="#fff"/>`)}</div>
        <div class="i">${icon(17, "0 0 17 17", svg`<path d="M4 13a3.500 3.500 0 0 1-.5-6.500 5 5 0 0 1 9-.5A3.700 3.700 0 0 1 13.500 13z" fill="#9c9fa4"/><path d="M5 13.500a3 3 0 0 1 .5-5.500 4.500 4.500 0 0 1 7-.5 3.200 3.200 0 0 1 1 6z" fill="#f0f0f0"/>`)}</div>
        <div class="i">${icon(17, "0 0 17 17", svg`<path d="M5 5.500h10.500v7H3.500V10" fill="none" stroke="#fff"/><path d="M6.500 7h7.500v4H6.500z" fill="#fff"/><path d="M16 7.500h1v3h-1zM1.500 2v2.500M3.500 2v2.500M.5 4.500h4v3h-4zM2.500 7.500V10h1" stroke="#fff" fill="none"/>`)}</div>
        <div class="i">${icon(17, "0 0 17 17", svg`<path d="M.8 6.500h2.500l3-3v10l-3-3H.8zM8.500 6c1 1.200 1 3.800 0 5M11 4.300c1.800 2 1.800 6.400 0 8.400M13.500 2.500c2.800 3 2.800 9 0 12" fill="none" stroke="#fff"/>`)}</div>
        <div class="clock">01:12 p. m.<br>18/06/2021</div>
        <div class="note">${icon(17, "0 0 17 17", svg`<path d="M0 1h16.500v12.500H8L4.500 17v-3.500H0z" fill="#fff"/><path d="M2.500 4.500h11.500M2.500 7.300h11.500M2.500 10h7" stroke="#1b1f2b" stroke-width="1.100"/>`)}<div class="num">24</div></div>
        <div class="edge"></div>
      </div>`;
  }
}

@customElement("app-root")
class AppRoot extends LitElement {
  static styles = [base, css`
    :host { width: 1920px; height: 1080px; overflow: hidden; background: #202124; display: flex; flex-direction: column; }
    .meet { flex: 1; display: flex; flex-direction: column; }
    .banner { margin: 16px 16px 0; height: 40px; border-radius: 8px; background: #3c4043; display: flex; align-items: center; gap: 16px; padding-left: 16px; color: #fff; font: 500 14.100px Inter, sans-serif; }
    .banner span { margin-top: -2px; }
    .stage { display: flex; margin: 16px 16px 0 65px; height: 785px; justify-content: space-between; }
    .people { width: 509px; height: 784px; margin-top: 1px; display: grid; grid-template-columns: 162px 162px 161px; grid-template-rows: 120px 121px 121px 121px 121px 120px; gap: 12px; }
  `];
  render() {
    return html`
      <browser-chrome></browser-chrome>
      <div class="meet">
        <div class="banner"><meet-avatar .size=${24} .logo=${{ x: 11.700, y: 8, k: 1 }}></meet-avatar><span>Emilio Galicia is presenting</span></div>
        <div class="stage">
          <shared-slide></shared-slide>
          <div class="people">${PEOPLE.map((p) => html`<meet-tile .who=${p}></meet-tile>`)}</div>
        </div>
        <meet-controls></meet-controls>
      </div>
      <task-bar></task-bar>`;
  }
}
